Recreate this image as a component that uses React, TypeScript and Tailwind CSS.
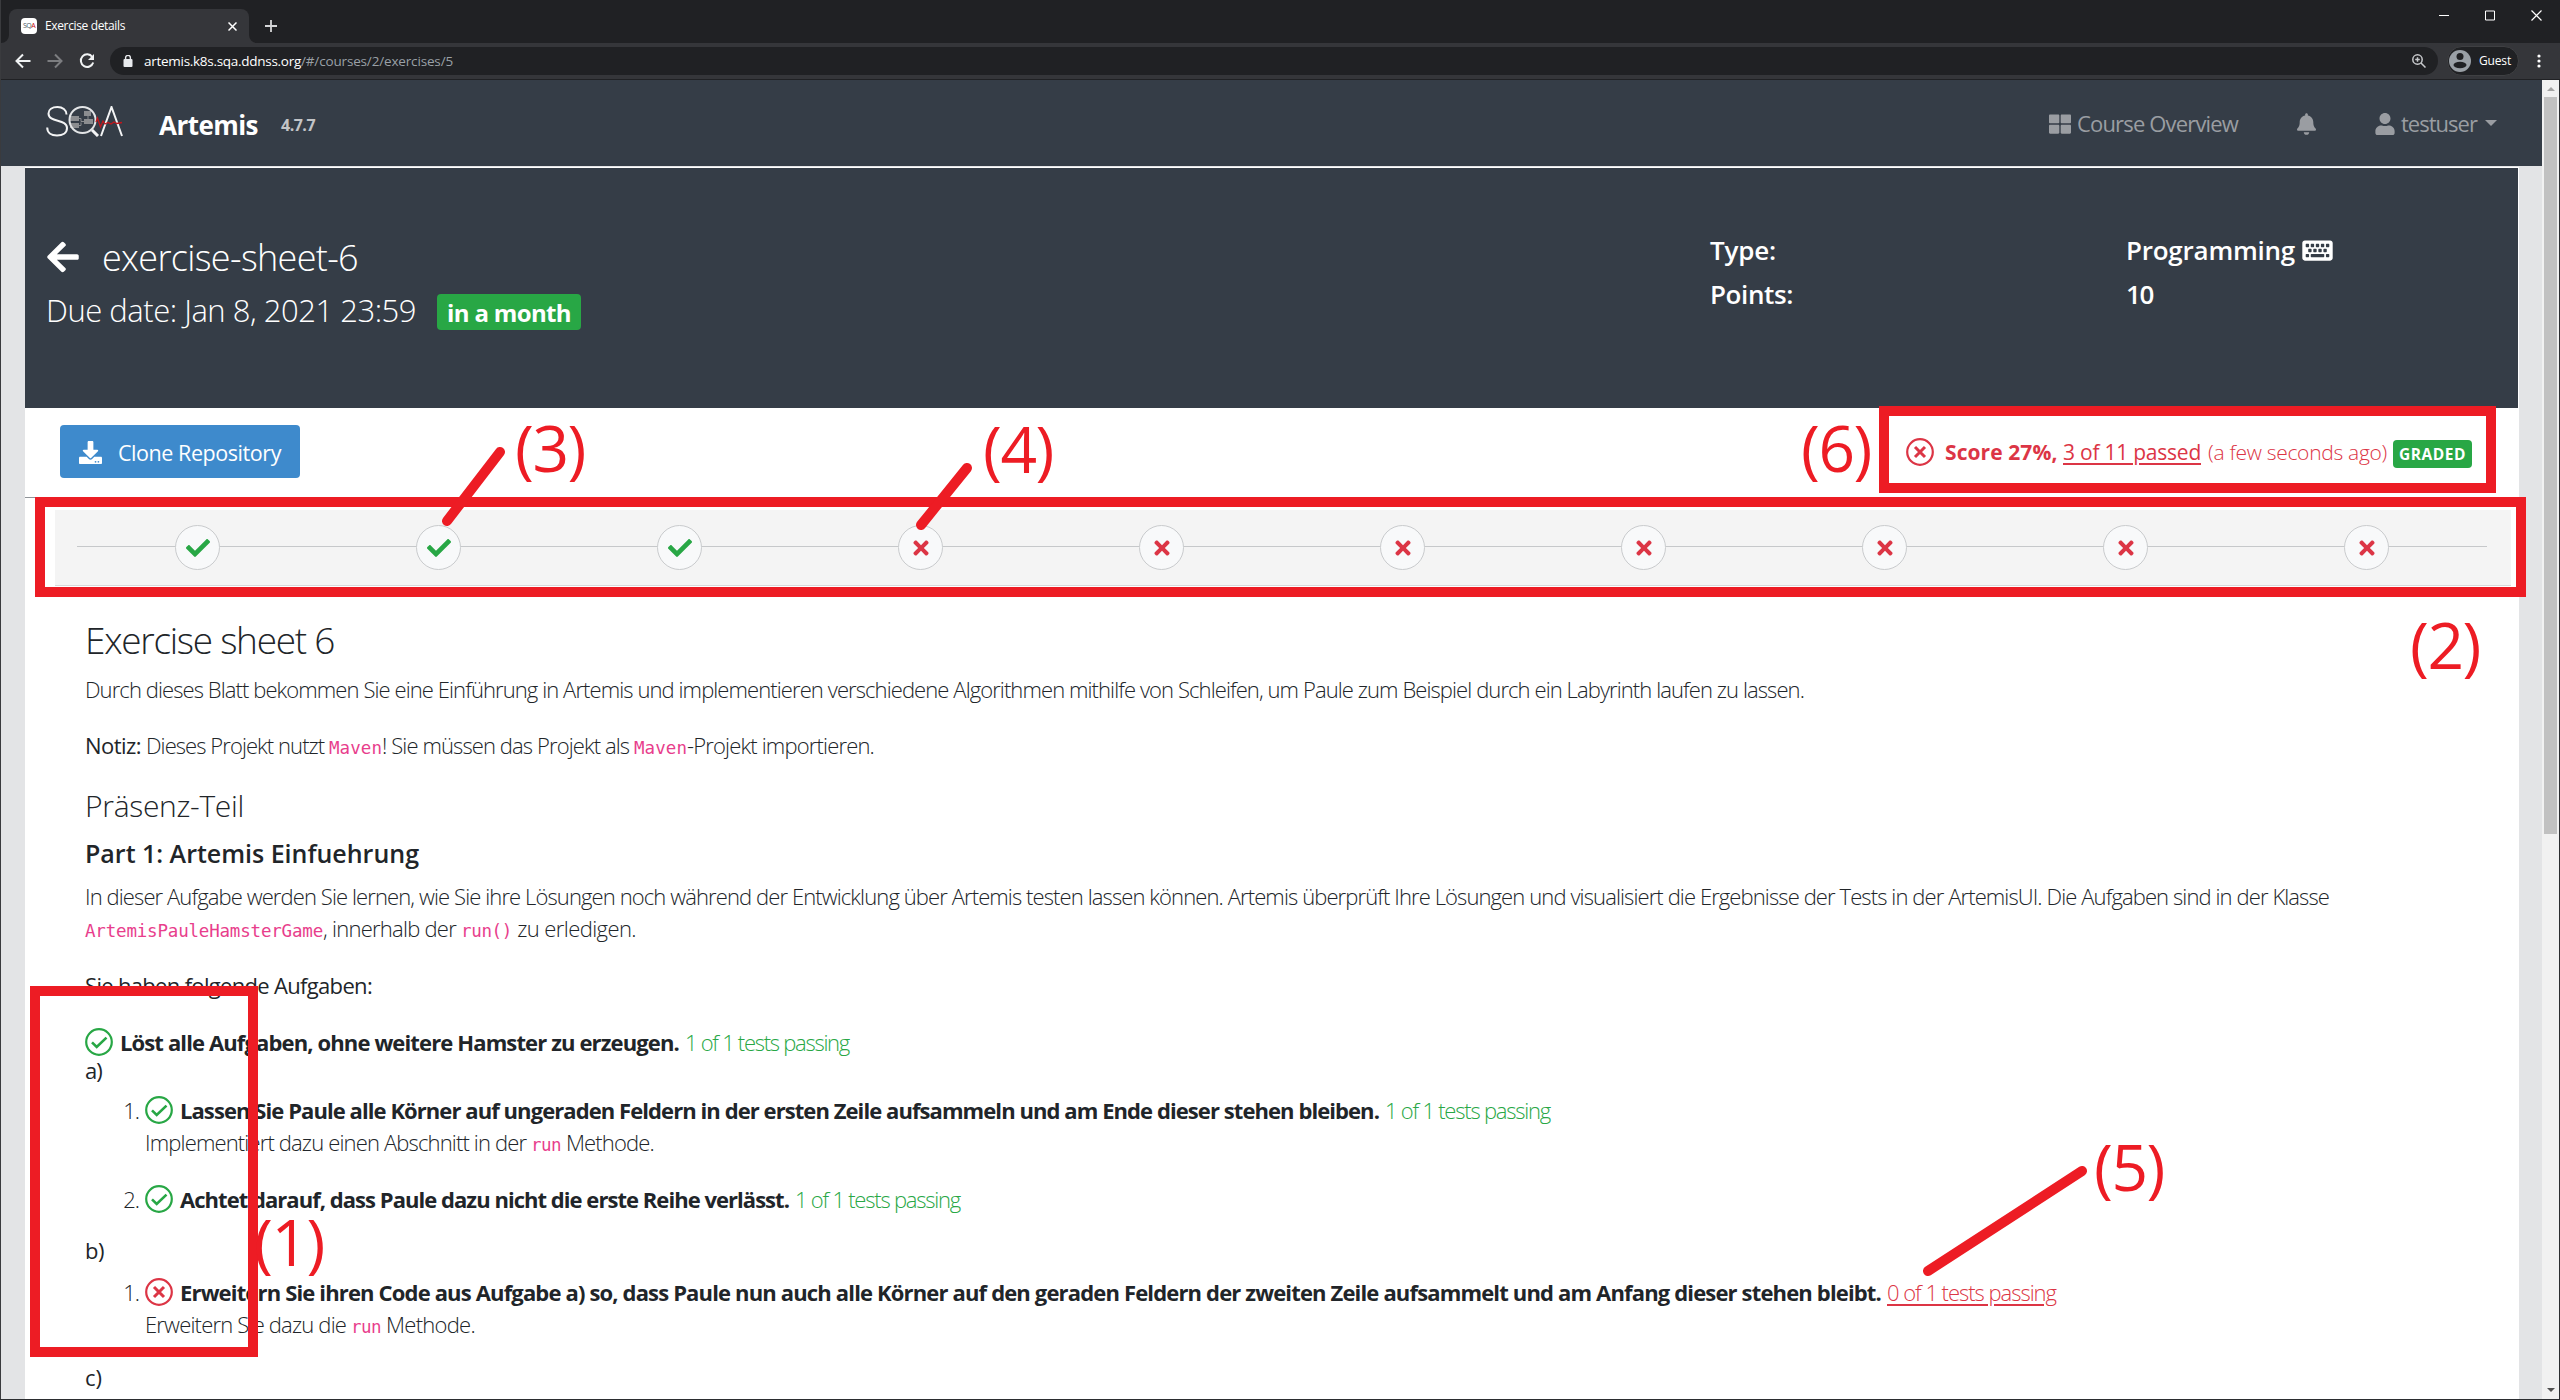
import { useLayoutEffect, useRef, useState, type ReactNode } from 'react';
import {
  FaArrowLeft,
  FaBell,
  FaCheck,
  FaDownload,
  FaKeyboard,
  FaThLarge,
  FaTimes,
  FaUser,
} from 'react-icons/fa';

/* A text run whose tracking is adjusted so that it fills exactly `w` pixels. */
function Fit({ w, className = '', children }: { w: number; className?: string; children: string }) {
  const ref = useRef<HTMLSpanElement>(null);
  const [spacing, setSpacing] = useState(0);
  useLayoutEffect(() => {
    const natural = ref.current!.getBoundingClientRect().width;
    setSpacing((w - natural) / children.length);
  }, [w, children]);
  return (
    <span ref={ref} className={`shrink-0 whitespace-pre ${className}`} style={{ letterSpacing: spacing }}>
      {children}
    </span>
  );
}

function Line({ className = '', children }: { className?: string; children: ReactNode }) {
  return <div className={`flex items-baseline whitespace-pre ${className}`}>{children}</div>;
}

function Code({ w, children }: { w: number; children: string }) {
  return (
    <Fit w={w} className="font-['DejaVu_Sans_Mono',monospace] text-[17.5px] font-normal text-[#e83e8c]">
      {children}
    </Fit>
  );
}

function ResultIcon({ ok, className = '' }: { ok: boolean; className?: string }) {
  return (
    <svg
      className={`h-7 w-7 shrink-0 ${ok ? 'text-[#28a745]' : 'text-[#dc3545]'} ${className}`}
      viewBox="0 0 28 28"
      fill="none"
      stroke="currentColor"
    >
      <circle cx="14" cy="14" r="12.8" strokeWidth="2.2" />
      {ok ? <path d="M7 14.300l4.700 4.700L21.500 9.600" strokeWidth="2.600" /> : <path d="M9 9l10 10M19 9L9 19" strokeWidth="3" />}
    </svg>
  );
}

function BrowserChrome() {
  return (
    <div className="shrink-0 font-['Open_Sans',sans-serif] text-white">
      <div className="flex h-[43px] bg-[#202124] pl-px">
        <svg className="mt-[35px] h-2 w-2" viewBox="0 0 8 8" fill="#35363a"><path d="M8 0v8H0A8 8 0 0 0 8 0z" /></svg>
        <div className="mt-[9px] flex h-[34px] w-[240px] items-center rounded-t-lg bg-[#35363a] pl-3">
          <span className="flex h-4 w-4 items-center justify-center rounded-sm bg-white text-[7px] tracking-[-0.5px] text-gray-600">
            SQ<span className="text-red-700">A</span>
          </span>
          <Fit w={80} className="ml-2 text-[12px]">Exercise details</Fit>
          <svg className="ml-auto mr-[12px] h-[9px] w-[9px]" viewBox="0 0 9 9" stroke="#fff" strokeWidth="1.5">
            <path d="M.5.5l8 8M8.500.5l-8 8" />
          </svg>
        </div>
        <svg className="mt-[35px] h-2 w-2" viewBox="0 0 8 8" fill="#35363a"><path d="M0 0v8h8A8 8 0 0 1 0 0z" /></svg>
        <svg className="ml-2 mt-5 h-3 w-3" viewBox="0 0 12 12" stroke="#d5d6d8" strokeWidth="1.8">
          <path d="M6 0v12M0 6h12" />
        </svg>
        <div className="ml-auto flex h-[30px] items-center gap-9 pr-[18px]">
          <svg className="h-[11px] w-[10px]" viewBox="0 0 10 11" stroke="#fff"><path d="M0 5.5h10" /></svg>
          <svg className="h-[11px] w-[10px]" viewBox="0 0 10 11" stroke="#fff" fill="none"><path d="M.5 1h9v9h-9z" /></svg>
          <svg className="h-[11px] w-[11px]" viewBox="0 0 11 11" stroke="#fff" strokeWidth="1.2"><path d="M.5.5l10 10M10.500.5l-10 10" /></svg>
        </div>
      </div>
      <div className="flex h-[37px] items-center border-b border-[#202124] bg-[#35363a] pl-[15px]">
        <svg className="h-4 w-4" viewBox="0 0 16 16" fill="none" stroke="#f1f3f4" strokeWidth="2"><path d="M15.500 8H2M8 1.500L1.500 8L8 14.500" /></svg>
        <svg className="ml-4 h-4 w-4" viewBox="0 0 16 16" fill="none" stroke="#7c7d80" strokeWidth="2"><path d="M.5 8H14M8 1.500L14.500 8L8 14.500" /></svg>
        <svg className="ml-4 h-4 w-4" viewBox="0 0 16 16" fill="none" stroke="#f1f3f4" strokeWidth="2"><path d="M13.300 4A6.300 6.300 0 1 0 14.200 9.500" /><path d="M15 1v6H9z" fill="#f1f3f4" stroke="none" /></svg>
        <div className="ml-[15px] flex h-7 w-[2328px] items-center rounded-full bg-[#202124] pl-[13px] pr-3 text-[13.5px]">
          <svg className="h-3 w-[10px]" viewBox="0 0 10 12"><path d="M2.600 5V2.800a2.400 2.400 0 0 1 4.800 0V5" fill="none" stroke="#e8eaed" strokeWidth="1.400" /><rect x=".5" y="4" width="9" height="8" rx="1" fill="#e8eaed" /></svg>
          <Fit w={157} className="ml-[11px]">artemis.k8s.sqa.ddnss.org</Fit>
          <Fit w={152} className="text-[#9aa0a6]">/#/courses/2/exercises/5</Fit>
          <svg className="ml-auto h-[14px] w-[14px]" viewBox="0 0 14 14" fill="none" stroke="#c8cacd" strokeWidth="1.500"><circle cx="5.500" cy="5.500" r="4.700" /><path d="M9 9l4.500 4.500M3.200 5.500h4.600M5.500 3.200v4.600" /></svg>
        </div>
        <div className="ml-[9px] flex h-[30px] w-[72px] items-center rounded-full border border-[#3f4043] bg-[#202124] pl-px">
          <svg className="h-[22px] w-[22px]" viewBox="0 0 22 22"><circle cx="11" cy="11" r="11" fill="#9aa0a6" /><circle cx="11" cy="6.500" r="3.500" fill="#202124" /><ellipse cx="11" cy="15" rx="6.500" ry="3.300" fill="#202124" /></svg>
          <Fit w={32} className="ml-2 text-[12px]">Guest</Fit>
        </div>
        <svg className="ml-[18px] h-[14px] w-1" viewBox="0 0 4 14" fill="#fff"><circle cx="2" cy="2" r="1.600" /><circle cx="2" cy="7" r="1.600" /><circle cx="2" cy="12" r="1.600" /></svg>
      </div>
    </div>
  );
}

function SqaLogo() {
  return (
    <svg className="mt-[26px] h-[31px] w-[77px]" viewBox="0 0 77 31" fill="none">
      <g fill="#8b8d90"><path d="M24 10h9v5h-9zM24 17h9v5h-9zM38 5h7v5h-7zM38 13h9v5h-9z" /></g>
      <path d="M33 12.500h2v3h3M33 19.500h2v-3M42 10v3" stroke="#8b8d90" />
      <path d="M20.500 8.500C20.500 4 16.500 1 11.500 1C6 1 2.500 3.500 2.500 7.500C2.500 17 21 12.500 21 22C21 27 16.500 29.500 11 29.500C5 29.500 1.200 26.500 1.200 21.500" stroke="#f3f4f5" strokeWidth="2" />
      <circle cx="36.500" cy="14" r="13" stroke="#e3e5e7" strokeWidth="2" />
      <path d="M46 24l6 6" stroke="#f3f4f5" strokeWidth="3" />
      <path d="M55 30L65.500 1L76 30" stroke="#f3f4f5" strokeWidth="2" />
      <path d="M50 16l1.500-4 3 9 2.500-6 2 3 3-1.500 3 1.500 3-2 3 1.500 5-1" stroke="#c4161c" strokeWidth="1.300" />
    </svg>
  );
}

function NavBar() {
  return (
    <header className="flex h-[86px] bg-[#353d47] pl-[46px] pr-[45px] text-[22px] text-[#9a9da2]">
      <SqaLogo />
      <Fit w={99} className="ml-[36px] text-[26px] font-bold leading-[90px] text-white">Artemis</Fit>
      <Fit w={34} className="ml-[23px] text-[16px] font-bold leading-[91px] text-[#c2c4c7]">4.7.7</Fit>
      <div className="ml-auto flex leading-[87px]">
        <FaThLarge className="mt-[33px] h-[22px] w-[22px]" />
        <Fit w={161} className="ml-[6px]">Course Overview</Fit>
        <FaBell className="ml-[59px] mt-[33px] h-[22px] w-[19px]" />
        <FaUser className="ml-[59px] mt-[33px] h-[22px] w-[20px]" />
        <Fit w={76} className="ml-[6px]">testuser</Fit>
        <span className="ml-2 mt-10 h-0 w-0 border-x-[6.500px] border-t-[6.500px] border-x-transparent border-t-[#9a9da2]" />
      </div>
    </header>
  );
}

function ExerciseHeader() {
  return (
    <section className="flex h-[240px] shrink-0 bg-[#353d47] text-white">
      <div className="w-[1685px] pl-[21px] pt-[66px]">
        <div className="flex h-12 leading-[48px]">
          <FaArrowLeft className="mt-[5px] h-[36px] w-[34px]" />
          <Fit w={256} className="ml-[22px] text-[36px] font-light">exercise-sheet-6</Fit>
        </div>
        <div className="mt-[6px] flex h-[44px] leading-[44px]">
          <Fit w={370} className="text-[31px] font-light">Due date: Jan 8, 2021 23:59</Fit>
          <div className="ml-[21px] mt-[6px] flex h-9 w-[144px] justify-center rounded bg-[#28a745] text-[24px] font-bold leading-[37px]">
            <Fit w={124}>in a month</Fit>
          </div>
        </div>
      </div>
      <dl className="grid grid-cols-[416px_auto] content-start pt-[60px] text-[26px] font-semibold leading-[44px]">
        <dt><Fit w={66}>Type:</Fit></dt>
        <dd className="flex"><Fit w={169}>Programming</Fit><FaKeyboard className="ml-[7px] mt-[9px] h-[27px] w-[31px]" /></dd>
        <dt><Fit w={83}>Points:</Fit></dt>
        <dd><Fit w={27}>10</Fit></dd>
      </dl>
    </section>
  );
}

function ActionBar() {
  return (
    <div className="flex h-[90px] shrink-0 border-b border-[#8f9398] pl-[35px] pr-[46px]">
      <button className="mt-[17px] flex h-[53px] w-[240px] items-center rounded bg-[#3e8acc] pl-[19px] text-[21.500px] text-white">
        <FaDownload className="mt-px h-[23px] w-[23px]" />
        <Fit w={163} className="ml-4 mt-[3px]">Clone Repository</Fit>
      </button>
      <div className="ml-auto mt-[28px] flex h-8 text-[21px] leading-8 text-[#dc3545]">
        <ResultIcon ok={false} className="mr-[11px] mt-[2px]" />
        <Fit w={118} className="font-bold">{'Score 27%, '}</Fit>
        <Fit w={138} className="underline decoration-2 underline-offset-[3px]">3 of 11 passed</Fit>
        <Fit w={186} className="pl-[7px] font-light">(a few seconds ago)</Fit>
        <span className="ml-[6px] mt-1 flex h-7 w-[79px] justify-center rounded bg-[#28a745] text-[15.500px] font-bold leading-[29px] text-white">
          <Fit w={67}>GRADED</Fit>
        </span>
      </div>
    </div>
  );
}

const steps = [true, true, true, false, false, false, false, false, false, false];

function Stepper() {
  return (
    <div className="ml-[30px] mr-[7px] mt-3 flex h-[76px] shrink-0 border-b border-[#d8d9da] bg-[#f4f4f4] pl-[22px] pr-[24px]">
      {steps.map((ok, i) => (
        <div key={i} className="flex flex-1 items-center">
          <span className="mb-[3px] h-px flex-1 bg-[#c6c8ca]" />
          <span className="flex h-[45px] w-[45px] items-center justify-center rounded-full border border-[#c9cbcd] bg-[#f8f9fa]">
            {ok ? <FaCheck className="h-6 w-6 text-[#28a745]" /> : <FaTimes className="h-[22px] w-[22px] text-[#dc3545]" />}
          </span>
          <span className="mb-[3px] h-px flex-1 bg-[#c6c8ca]" />
        </div>
      ))}
    </div>
  );
}

function Task({ n, ok, w, title, resultW, result }: { n?: string; ok: boolean; w: number; title: string; resultW: number; result: string }) {
  return (
    <>
      {n && <span className="w-[60px] pr-[6px] text-right tracking-[-1px]">{n}</span>}
      <ResultIcon ok={ok} className="self-center" />
      <Fit w={w} className="ml-[7px] font-bold">{title}</Fit>
      <Fit
        w={resultW}
        className={ok ? 'ml-[6px] text-[#28a745]' : 'ml-[6px] text-[#dc3545] underline decoration-2 underline-offset-[3px]'}
      >
        {result}
      </Fit>
    </>
  );
}

function ProblemStatement() {
  return (
    <article className="pl-[60px] text-[22px] font-light leading-[32px] text-[#212529]">
      <Line className="mt-[29px] h-[50px] text-[37px] leading-[50px]"><Fit w={249}>Exercise sheet 6</Fit></Line>
      <Line className="mt-2 h-[33px] leading-[33px]">
        <Fit w={1719}>Durch dieses Blatt bekommen Sie eine Einführung in Artemis und implementieren verschiedene Algorithmen mithilfe von Schleifen, um Paule zum Beispiel durch ein Labyrinth laufen zu lassen.</Fit>
      </Line>
      <Line className="mt-[23px] h-[33px] leading-[33px]">
        <Fit w={61} className="font-normal">{'Notiz: '}</Fit>
        <Fit w={183}>{'Dieses Projekt nutzt '}</Fit>
        <Code w={53}>Maven</Code>
        <Fit w={252}>{'! Sie müssen das Projekt als '}</Fit>
        <Code w={53}>Maven</Code>
        <Fit w={187}>-Projekt importieren.</Fit>
      </Line>
      <Line className="mt-[24px] h-10 text-[30px] leading-10"><Fit w={159}>Präsenz-Teil</Fit></Line>
      <Line className="mt-[11px] h-8 text-[25px] font-semibold leading-8"><Fit w={334}>Part 1: Artemis Einfuehrung</Fit></Line>
      <Line className="mt-[11px] h-8">
        <Fit w={2244}>In dieser Aufgabe werden Sie lernen, wie Sie ihre Lösungen noch während der Entwicklung über Artemis testen lassen können. Artemis überprüft Ihre Lösungen und visualisiert die Ergebnisse der Tests in der ArtemisUI. Die Aufgaben sind in der Klasse</Fit>
      </Line>
      <Line className="h-8">
        <Code w={238}>ArtemisPauleHamsterGame</Code>
        <Fit w={138}>{', innerhalb der '}</Fit>
        <Code w={51}>run()</Code>
        <Fit w={124}>{' zu erledigen.'}</Fit>
      </Line>
      <Line className="mt-[25px] h-[33px] font-normal leading-[33px]"><Fit w={287}>Sie haben folgende Aufgaben:</Fit></Line>
      <Line className="mt-[26px] h-7 leading-7">
        <Task ok w={559} title="Löst alle Aufgaben, ohne weitere Hamster zu erzeugen." resultW={164} result="1 of 1 tests passing" />
      </Line>
      <Line className="h-7 font-normal leading-7"><Fit w={17}>a)</Fit></Line>
      <Line className="mt-[10px] h-8">
        <Task n="1." ok w={1199} title="Lassen Sie Paule alle Körner auf ungeraden Feldern in der ersten Zeile aufsammeln und am Ende dieser stehen bleiben." resultW={165} result="1 of 1 tests passing" />
      </Line>
      <Line className="h-8 pl-[60px]">
        <Fit w={386}>{'Implementiert dazu einen Abschnitt in der '}</Fit>
        <Code w={30}>run</Code>
        <Fit w={93}>{' Methode.'}</Fit>
      </Line>
      <Line className="mt-[25px] h-8">
        <Task n="2." ok w={609} title="Achtet darauf, dass Paule dazu nicht die erste Reihe verlässt." resultW={165} result="1 of 1 tests passing" />
      </Line>
      <Line className="mt-[19px] h-8 font-normal"><Fit w={19}>b)</Fit></Line>
      <Line className="mt-[10px] h-8">
        <Task n="1." ok={false} w={1701} title="Erweitern Sie ihren Code aus Aufgabe a) so, dass Paule nun auch alle Körner auf den geraden Feldern der zweiten Zeile aufsammelt und am Anfang dieser stehen bleibt." resultW={169} result="0 of 1 tests passing" />
      </Line>
      <Line className="h-8 pl-[60px]">
        <Fit w={206}>{'Erweitern Sie dazu die '}</Fit>
        <Code w={30}>run</Code>
        <Fit w={94}>{' Methode.'}</Fit>
      </Line>
      <Line className="mt-[21px] h-8 font-normal"><Fit w={17}>c)</Fit></Line>
    </article>
  );
}

/* Red frames, pointer strokes and numbers lying over the page. */
function Annotations() {
  return (
    <div className="pointer-events-none absolute inset-0 text-[64px] leading-[46px] text-[#ed1c24]">
      <div className="absolute left-[30px] top-[986px] h-[371px] w-[228px] border-[10px] border-[#ed1c24]" />
      <div className="absolute left-[35px] top-[497px] h-[100px] w-[2491px] border-[10px] border-[#ed1c24]" />
      <div className="absolute left-[1879px] top-[406px] h-[87px] w-[617px] border-[10px] border-[#ed1c24]" />
      <svg className="absolute inset-0 h-full w-full" stroke="#ed1c24" strokeWidth="10" strokeLinecap="round">
        <path d="M447 521L500 452M921 525L967 468M1928 1271L2082 1171" />
      </svg>
      <Fit w={70} className="absolute left-[254px] top-[1219px]">(1)</Fit>
      <Fit w={70} className="absolute left-[2410px] top-[622px]">(2)</Fit>
      <Fit w={70} className="absolute left-[515px] top-[425px]">(3)</Fit>
      <Fit w={70} className="absolute left-[983px] top-[426px]">(4)</Fit>
      <Fit w={70} className="absolute left-[2094px] top-[1144px]">(5)</Fit>
      <Fit w={70} className="absolute left-[1801px] top-[425px]">(6)</Fit>
    </div>
  );
}

function Scrollbar() {
  return (
    <div className="flex w-[17px] shrink-0 flex-col items-center bg-[#f1f1f1]">
      <span className="mt-[7px] h-0 w-0 border-x-4 border-b-4 border-x-transparent border-b-[#a3a3a3]" />
      <span className="mt-[6px] h-[737px] w-[13px] bg-[#c1c1c1]" />
      <span className="mb-[7px] mt-auto h-0 w-0 border-x-4 border-t-4 border-x-transparent border-t-[#505050]" />
    </div>
  );
}

export default function App() {
  return (
    <div className="relative flex h-[1400px] w-[2560px] flex-col overflow-hidden border-b border-[#2b2d30] bg-[#e3e4e6] font-['Open_Sans','Noto_Sans',sans-serif]">
      <BrowserChrome />
      <div className="flex min-h-0 flex-1 border-r border-[#2b2d30]">
        <div className="flex min-w-0 flex-1 flex-col">
          <NavBar />
          <main className="ml-[25px] mr-[23px] mt-px flex min-h-0 flex-1 flex-col overflow-hidden border-r border-t border-white bg-white">
            <ExerciseHeader />
            <ActionBar />
            <Stepper />
            <ProblemStatement />
          </main>
        </div>
        <Scrollbar />
      </div>
      <div className="absolute inset-y-0 left-0 w-px bg-[#3a3b3e]" />
      <Annotations />
    </div>
  );
}
